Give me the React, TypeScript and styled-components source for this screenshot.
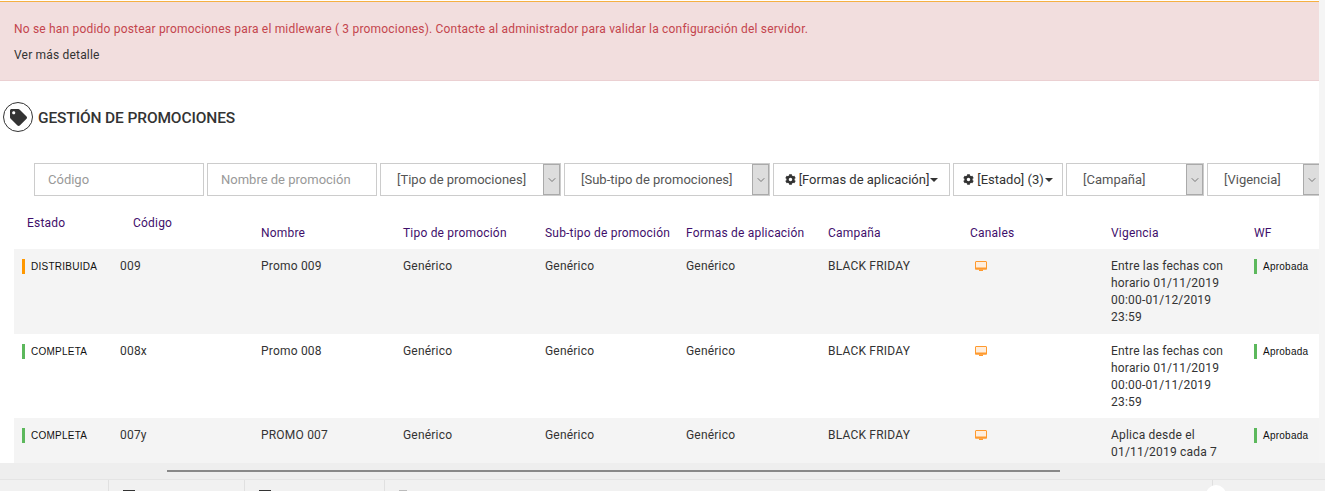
import React from "react";
import styled, { createGlobalStyle } from "styled-components";
import { FaTag, FaCog } from "react-icons/fa";
import { FiChevronDown } from "react-icons/fi";

const GlobalStyle = createGlobalStyle`
  html, body {
    margin: 0;
    padding: 0;
    height: 491px;
    overflow: hidden;
    background: #f5f5f5;
    font-family: Roboto, "Liberation Sans", sans-serif;
  }
  * { box-sizing: border-box; }
`;

const columns = "106px 141px 142px 142px 141px 142px 142px 141px 143px 1fr";

const rows = [
  {
    state: "DISTRIBUIDA",
    stateColor: "#ff9800",
    code: "009",
    name: "Promo 009",
    validity: ["Entre las fechas con", "horario 01/11/2019", "00:00-01/12/2019", "23:59"],
  },
  {
    state: "COMPLETA",
    stateColor: "#5cb85c",
    code: "008x",
    name: "Promo 008",
    validity: ["Entre las fechas con", "horario 01/11/2019", "00:00-01/11/2019", "23:59"],
  },
  {
    state: "COMPLETA",
    stateColor: "#5cb85c",
    code: "007y",
    name: "PROMO 007",
    validity: ["Aplica desde el", "01/11/2019 cada 7"],
  },
];

function ScreenIcon() {
  return (
    <svg width="12" height="11" viewBox="0 0 12 11">
      <rect x="0.5" y="0.5" width="11" height="7.5" rx="0.5" fill="#ffeedd" stroke="#ff9a2e" />
      <rect x="0" y="6.5" width="12" height="2" fill="#ff9a2e" />
      <rect x="4" y="8.5" width="4" height="1.5" fill="#ff9a2e" />
    </svg>
  );
}

function SelectBox({ width, label }: { width: number; label: string }) {
  return (
    <SelectFilter $width={width}>
      <SelectLabel>{label}</SelectLabel>
      <SelectArrow><FiChevronDown size={12} strokeWidth={1.5} /></SelectArrow>
    </SelectFilter>
  );
}

export default function App() {
  return (
    <Page>
      <GlobalStyle />
      <Content>
        <Alert>
          <AlertMessage>
            No se han podido postear promociones para el midleware ( 3 promociones). Contacte al
            administrador para validar la configuración del servidor.
          </AlertMessage>
          <AlertLink>Ver más detalle</AlertLink>
        </Alert>

        <TitleRow>
          <TitleIcon>
            <FaTag size={17} />
          </TitleIcon>
          <Title>GESTIÓN DE PROMOCIONES</Title>
        </TitleRow>

        <Filters>
          <TextFilter $width={170} placeholder="Código" />
          <TextFilter $width={170} placeholder="Nombre de promoción" />
          <SelectBox width={181} label="[Tipo de promociones]" />
          <SelectBox width={206} label="[Sub-tipo de promociones]" />
          <DropdownFilter $width={177}>
            <FaCog size={11} />
            <span>[Formas de aplicación]</span>
            <Caret />
          </DropdownFilter>
          <DropdownFilter $width={110}>
            <FaCog size={11} />
            <span>[Estado] (3)</span>
            <Caret />
          </DropdownFilter>
          <SelectBox width={138} label="[Campaña]" />
          <SelectBox width={114} label="[Vigencia]" />
        </Filters>

        <Table>
          <HeaderRow>
            <HeadRaised $indent={13}>Estado</HeadRaised>
            <HeadRaised $indent={13}>Código</HeadRaised>
            <Head>Nombre</Head>
            <Head>Tipo de promoción</Head>
            <Head>Sub-tipo de promoción</Head>
            <Head>Formas de aplicación</Head>
            <Head>Campaña</Head>
            <Head>Canales</Head>
            <Head>Vigencia</Head>
            <Head>WF</Head>
          </HeaderRow>
          {rows.map((row) => (
            <Row key={row.code}>
              <StatusCell>
                <StatusTag $color={row.stateColor}>{row.state}</StatusTag>
              </StatusCell>
              <Cell>{row.code}</Cell>
              <Cell>{row.name}</Cell>
              <Cell>Genérico</Cell>
              <Cell>Genérico</Cell>
              <Cell>Genérico</Cell>
              <Cell>BLACK FRIDAY</Cell>
              <Cell>
                <ChannelIcon><ScreenIcon /></ChannelIcon>
              </Cell>
              <Cell>
                {row.validity.map((line) => (
                  <div key={line}>{line}</div>
                ))}
              </Cell>
              <StatusCell>
                <StatusTag $color="#5cb85c" $plain>Aprobada</StatusTag>
              </StatusCell>
            </Row>
          ))}
        </Table>
      </Content>

      <ScrollTrack>
        <ScrollThumb />
      </ScrollTrack>
      <Footer>
        <FooterSection $width={109} />
        <FooterSection $width={136}><FooterMark $width={12} /></FooterSection>
        <FooterSection $width={140}><FooterMark $width={12} /></FooterSection>
        <FooterSection $width={828}><FooterMark $width={8} $light /></FooterSection>
        <FooterCircle />
      </Footer>
    </Page>
  );
}

const Page = styled.div`
  width: 1325px;
  height: 491px;
  overflow: hidden;
  display: flex;
  flex-direction: column;
`;

const Content = styled.div`
  width: 1319px;
  height: 463px;
  flex: none;
  padding-top: 1px;
  overflow: hidden;
  background: #fff;
`;

const Alert = styled.div`
  height: 80px;
  padding: 19px 14px 0;
  background: #f2dede;
  border-top: 1px solid #f5b042;
  border-bottom: 1px solid #ebd0d2;
  font-size: 12px;
  line-height: 16px;
  letter-spacing: 0.19px;
`;

const AlertMessage = styled.div`
  color: #c4454d;
`;

const AlertLink = styled.div`
  margin-top: 10px;
  color: #333;
`;

const TitleRow = styled.div`
  display: flex;
  align-items: center;
  gap: 5px;
  height: 30px;
  margin-top: 21px;
  padding-left: 3px;
`;

const TitleIcon = styled.span`
  width: 30px;
  height: 30px;
  display: flex;
  align-items: center;
  justify-content: center;
  border: 1px solid #333;
  border-radius: 50%;
  color: #333;
`;

const Title = styled.h1`
  margin: 2px 0 0;
  font-size: 15.5px;
  font-weight: 500;
  letter-spacing: -0.12px;
  color: #333;
`;

const Filters = styled.div`
  display: flex;
  gap: 3px;
  margin-top: 31px;
  padding-left: 34px;
  height: 33px;
  overflow: hidden;
`;

const TextFilter = styled.input<{ $width: number }>`
  flex: none;
  width: ${({ $width }) => $width}px;
  height: 33px;
  padding: 0 13px;
  border: 1px solid #ccc;
  outline: none;
  font: 13px Roboto, "Liberation Sans", sans-serif;
  &::placeholder {
    color: #999;
    opacity: 1;
  }
`;

const SelectFilter = styled.div<{ $width: number }>`
  flex: none;
  display: flex;
  width: ${({ $width }) => $width}px;
  height: 33px;
  border: 1px solid #ccc;
  font-size: 13px;
  color: #555;
`;

const SelectLabel = styled.span`
  flex: 1;
  display: flex;
  align-items: center;
  padding-left: 16px;
  white-space: nowrap;
`;

const SelectArrow = styled.span`
  width: 17px;
  display: flex;
  align-items: center;
  justify-content: center;
  background: #ddd;
  border: 1px solid #aaa;
  color: #555;
`;

const DropdownFilter = styled.div<{ $width: number }>`
  flex: none;
  display: flex;
  align-items: center;
  justify-content: center;
  gap: 3px;
  width: ${({ $width }) => $width}px;
  height: 33px;
  border: 1px solid #ccc;
  font-size: 13px;
  color: #333;
`;

const Caret = styled.span`
  margin-left: -2px;
  border-top: 4px solid #333;
  border-left: 4px solid transparent;
  border-right: 4px solid transparent;
`;

const Table = styled.div`
  margin-top: 13px;
  padding-left: 14px;
`;

const HeaderRow = styled.div`
  display: grid;
  grid-template-columns: ${columns};
  height: 40px;
`;

const Head = styled.div`
  padding-top: 16px;
  font-size: 12px;
  line-height: 16px;
  letter-spacing: 0.2px;
  color: #3f0f6b;
`;

const HeadRaised = styled(Head)<{ $indent: number }>`
  padding-top: 6px;
  padding-left: ${({ $indent }) => $indent}px;
`;

const Row = styled.div`
  display: grid;
  grid-template-columns: ${columns};
  height: 84.5px;
  &:nth-child(even) {
    background: #f4f4f4;
  }
`;

const Cell = styled.div`
  padding-top: 9px;
  font-size: 12px;
  line-height: 17px;
  letter-spacing: 0.2px;
  color: #333;
`;

const StatusCell = styled.div`
  padding-top: 10px;
`;

const StatusTag = styled.span<{ $color: string; $plain?: boolean }>`
  display: block;
  height: 15px;
  margin-left: ${({ $plain }) => ($plain ? "0" : "8px")};
  padding-left: 6px;
  border-left: 3px solid ${({ $color }) => $color};
  font-family: "Liberation Sans", Arial, sans-serif;
  font-size: 10px;
  line-height: 16px;
  letter-spacing: 0.25px;
  color: #111;
`;

const ChannelIcon = styled.span`
  display: inline-flex;
  padding: 3px 0 0 5px;
`;

const ScrollTrack = styled.div`
  flex: none;
  height: 17px;
  padding: 7px 265px 0 167px;
  background: #eee;
  border-bottom: 1px solid #e4e4e4;
`;

const ScrollThumb = styled.div`
  height: 2px;
  background: #888;
`;

const Footer = styled.div`
  flex: 1;
  display: flex;
  align-items: stretch;
  overflow: hidden;
  background: #f1f1f1;
`;

const FooterSection = styled.div<{ $width: number }>`
  flex: none;
  width: ${({ $width }) => $width}px;
  padding: 10px 0 0 14px;
  border-right: 1px solid #e0e0e0;
`;

const FooterMark = styled.span<{ $width: number; $light?: boolean }>`
  display: block;
  width: ${({ $width }) => $width}px;
  height: 1px;
  background: ${({ $light }) => ($light ? "#bbb" : "#333")};
`;

const FooterCircle = styled.span`
  flex: none;
  width: 20px;
  height: 20px;
  margin: 5px 0 0 -7px;
  border-radius: 50%;
  background: #fff;
`;
